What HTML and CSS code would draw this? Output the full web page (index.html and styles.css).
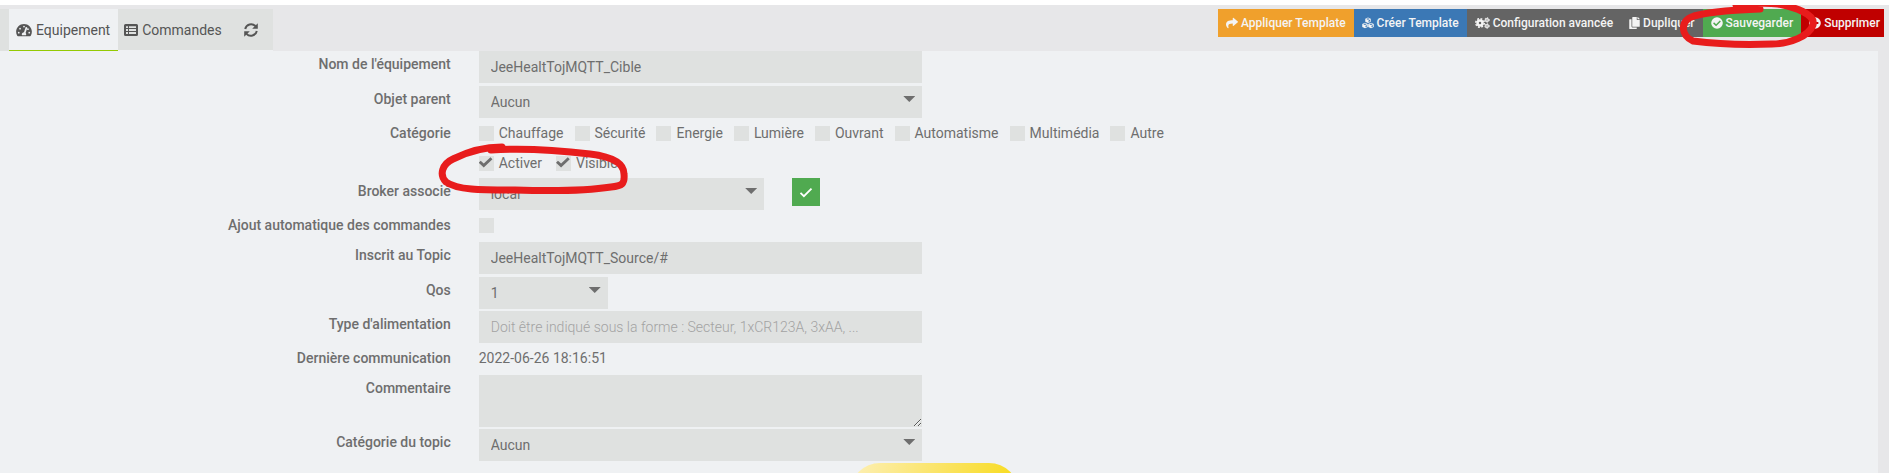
FILE: index.html
```html
<!DOCTYPE html>
<html lang="fr">
<head>
<meta charset="utf-8">
<title>Equipement</title>
<link rel="stylesheet" href="styles.css">
</head>
<body>
<header class="topbar">
  <nav class="tabs">
    <a class="tab tab-active" href="#equipement">
      <svg class="icon-wide" viewBox="0 0 576 512"><path fill-rule="evenodd" d="M288 32C129 32 0 161 0 320c0 53 14 102 39 145 6 10 16 15 27 15h444c11 0 21-5 27-15 25-43 39-92 39-145C576 161 447 32 288 32zM288 96a32 32 0 1 1 0 64a32 32 0 0 1 0-64zM96 384a32 32 0 1 1 0-64a32 32 0 0 1 0 64zM144 240a32 32 0 1 1 0-64a32 32 0 0 1 0 64zM391 151c13 4 20 18 16 31l-61 184c13 11 22 28 22 50 0 12-3 23-9 32H217c-6-9-9-20-9-32 0-43 34-79 79-80l61-184c4-13 30-5 43-1zM432 192a32 32 0 1 1 0 64a32 32 0 0 1 0-64zM480 384a32 32 0 1 1 0-64a32 32 0 0 1 0 64z"/></svg>
      <span>Equipement</span>
    </a>
    <a class="tab" href="#commandes">
      <svg class="icon" viewBox="0 0 14 14"><path fill-rule="evenodd" d="M1.500 1h11A1.500 1.500 0 0 1 14 2.500v9a1.500 1.500 0 0 1-1.500 1.500h-11A1.500 1.500 0 0 1 0 11.500v-9A1.500 1.500 0 0 1 1.500 1zM2 3.200V5h2V3.200zM5 3.200V5h7V3.200zM2 6v2h2V6zM5 6v2h7V6zM2 9v2h2V9zM5 9v2h7V9z"/></svg>
      <span>Commandes</span>
    </a>
    <a class="tab tab-refresh" href="#refresh" aria-label="Rafraîchir">
      <svg class="icon" viewBox="0 0 14 14"><path d="M1.200 6A6 6 0 0 1 11.500 3.200M12.800 8A6 6 0 0 1 2.500 10.800" fill="none" stroke="currentColor" stroke-width="2"/><path d="M13.800.2v5.600H8.200zM.2 13.800V8.200h5.600z"/></svg>
    </a>
  </nav>
  <div class="actions">
    <button class="btn btn-orange" type="button"><svg class="icon-small" viewBox="0 0 512 512"><path d="M503.700 189.800L327.700 37.900C312.300 24.500 288 35.300 288 56v80C127.400 137.900 0 170.100 0 322.300c0 61.500 39.600 122.300 83.300 154.200 13.700 9.900 33.100-2.600 28.100-18.700C66.100 312.800 132.900 274.300 288 272.100V360c0 20.700 24.300 31.500 39.700 18.200l176-152c11.100-9.600 11.100-26.800 0-36.400z"/></svg>Appliquer Template</button>
    <button class="btn btn-blue" type="button"><svg class="icon-small" viewBox="0 0 24 24"><path fill-rule="evenodd" d="M12 1l5.500 2.300v6.200L12 12 6.500 9.500V3.300zM8.700 4.100L12 5.500l3.300-1.400L12 2.700zM13 7v3l3-1.400V5.700zM6 11.500l5.500 2.300V20L6 22.500.5 20v-6.200zM2.700 14.600L6 16l3.300-1.400L6 13.200zM7 17.600v3l3-1.400v-2.900zM18 11.500l5.500 2.300V20L18 22.500 12.500 20v-6.200zM14.700 14.600L18 16l3.300-1.400-3.300-1.400zM19 17.600v3l3-1.400v-2.900z"/></svg>Créer Template</button>
    <button class="btn btn-grey" type="button"><svg class="icon-gears" viewBox="0 0 30 24"><g fill="none" stroke="currentColor"><circle cx="10" cy="12" r="5" stroke-width="5"/><circle cx="10" cy="12" r="8.500" stroke-width="3" stroke-dasharray="3.700 2.975"/><circle cx="24" cy="6" r="2.600" stroke-width="2.600"/><circle cx="24" cy="6" r="4.500" stroke-width="2" stroke-dasharray="2.700 2.012"/><circle cx="24" cy="18" r="2.600" stroke-width="2.600"/><circle cx="24" cy="18" r="4.500" stroke-width="2" stroke-dasharray="2.700 2.012"/></g></svg>Configuration avancée</button>
    <button class="btn btn-grey" type="button"><svg class="icon-copy" viewBox="0 0 448 512"><path d="M320 448v40c0 13.300-10.700 24-24 24H24c-13.300 0-24-10.700-24-24V120c0-13.300 10.700-24 24-24h72v296c0 30.900 25.100 56 56 56h168zm0-344V0H152c-13.300 0-24 10.700-24 24v368c0 13.300 10.700 24 24 24h272c13.300 0 24-10.700 24-24V128H344c-13.200 0-24-10.800-24-24zm121-31L375 7a24 24 0 0 0-17-7h-6v96h96v-6a24 24 0 0 0-7-17z"/></svg>Dupliquer</button>
    <div class="marked">
      <button class="btn btn-green" type="button"><svg class="icon-small" viewBox="0 0 512 512"><path fill-rule="evenodd" d="M504 256a248 248 0 1 1-496 0a248 248 0 0 1 496 0zM227.300 387.300l184-184c6.300-6.200 6.300-16.400 0-22.600l-22.600-22.600c-6.300-6.300-16.400-6.300-22.600 0L216 308.100l-70.100-70c-6.200-6.300-16.300-6.300-22.600 0l-22.600 22.600c-6.300 6.200-6.300 16.400 0 22.600l104 104c6.200 6.300 16.400 6.300 22.600 0z"/></svg>Sauvegarder</button>
      <svg class="mark mark-save" viewBox="0 0 142 52"><path d="M60 9C78 7 94 7 102 8C118 11 140 18 137 29C133 40 114 48 96 48C70 49 40 48 17 45C5 40 3 25 18 20C38 15 60 14 84 13"/></svg>
    </div>
    <button class="btn btn-red" type="button"><svg class="icon-small" viewBox="0 0 512 512"><path fill-rule="evenodd" d="M256 8a248 248 0 1 0 0 496a248 248 0 0 0 0-496zM124 296c-6.600 0-12-5.400-12-12v-56c0-6.600 5.400-12 12-12h264c6.600 0 12 5.400 12 12v56c0 6.600-5.400 12-12 12z"/></svg>Supprimer</button>
  </div>
</header>
<main class="page">
  <form class="form">
    <div class="row row-field row-loose">
      <label class="label" for="name">Nom de l'équipement</label>
      <input class="control" id="name" type="text" value="JeeHealtTojMQTT_Cible">
    </div>
    <div class="row row-field">
      <label class="label" for="parent">Objet parent</label>
      <div class="select"><select class="control" id="parent"><option>Aucun</option></select></div>
    </div>
    <div class="row row-text" role="group" aria-labelledby="cat">
      <span class="label" id="cat">Catégorie</span>
      <div class="checks">
        <label class="check"><input type="checkbox">Chauffage</label>
        <label class="check"><input type="checkbox">Sécurité</label>
        <label class="check"><input type="checkbox">Energie</label>
        <label class="check"><input type="checkbox">Lumière</label>
        <label class="check"><input type="checkbox">Ouvrant</label>
        <label class="check"><input type="checkbox">Automatisme</label>
        <label class="check"><input type="checkbox">Multimédia</label>
        <label class="check"><input type="checkbox">Autre</label>
      </div>
    </div>
    <div class="row row-short">
      <span class="label"></span>
      <div class="checks checks-wide marked">
        <label class="check"><input type="checkbox" checked>Activer</label>
        <label class="check"><input type="checkbox" checked>Visible</label>
        <svg class="mark mark-active" viewBox="0 0 194 54"><path d="M56 13C90 11 130 14 155 17C180 20 189 27 189 37C190 47 187 49 176 50C150 54 110 54 80 53C45 53 22 53 11 45C4 38 7 27 18 22C32 15 47 10 67 10"/></svg>
      </div>
    </div>
    <div class="row row-field">
      <label class="label" for="broker">Broker associé</label>
      <div class="broker">
        <div class="select"><select class="control" id="broker"><option>local</option></select></div>
        <button class="btn-check" type="button" aria-label="Valider"><svg class="icon" viewBox="0 0 14 14"><path d="M1.500 7.800l3.400 3.400L12.500 3.600" fill="none" stroke="currentColor" stroke-width="1.800"/></svg></button>
      </div>
    </div>
    <div class="row row-text">
      <label class="label" for="auto">Ajout automatique des commandes</label>
      <div class="checks"><span class="check"><input type="checkbox" id="auto"></span></div>
    </div>
    <div class="row row-field row-loose">
      <label class="label" for="topic">Inscrit au Topic</label>
      <input class="control" id="topic" type="text" value="JeeHealtTojMQTT_Source/#">
    </div>
    <div class="row row-field">
      <label class="label" for="qos">Qos</label>
      <div class="select select-small"><select class="control" id="qos"><option>1</option></select></div>
    </div>
    <div class="row row-field">
      <label class="label" for="power">Type d'alimentation</label>
      <input class="control" id="power" type="text" placeholder="Doit être indiqué sous la forme : Secteur, 1xCR123A, 3xAA, ...">
    </div>
    <div class="row row-text">
      <span class="label">Dernière communication</span>
      <span class="value">2022-06-26 18:16:51</span>
    </div>
    <div class="row row-field">
      <label class="label" for="comment">Commentaire</label>
      <textarea class="control control-area" id="comment"></textarea>
    </div>
    <div class="row row-field">
      <label class="label" for="topiccat">Catégorie du topic</label>
      <div class="select"><select class="control" id="topiccat"><option>Aucun</option></select></div>
    </div>
  </form>
</main>
<div class="bubble"></div>
</body>
</html>
```
FILE: styles.css
```css
* { box-sizing: border-box; }

body {
  margin: 0;
  min-height: 100vh;
  display: flex;
  flex-direction: column;
  overflow: hidden;
  border-top: 5px solid #fff;
  background: #e7e7e9;
  color: #6e6e6e;
  font: 14px/26px Roboto, sans-serif;
}

button, input, select, textarea { font: inherit; color: inherit; border: 0; border-radius: 0; margin: 0; }

svg { display: block; flex: none; fill: currentColor; }
.icon { width: 14px; height: 14px; }
.icon-wide { width: 16px; height: 14px; }
.icon-small { width: 12px; height: 12px; }
.icon-gears { width: 15px; height: 12px; }
.icon-copy { width: 11px; height: 12px; }

.topbar {
  display: flex;
  justify-content: space-between;
  align-items: flex-start;
  height: 46px;
  padding: 4px 5px 0 0;
}

.tabs { display: flex; padding-left: 9px; background: #dfe1e0; }
.tab {
  display: flex;
  align-items: center;
  gap: 4px;
  height: 42px;
  padding: 0 7px 0 6px;
  border-bottom: 1px solid #eff1f3;
  color: #555;
  text-decoration: none;
}
.tab-active { padding: 0 8px 0 7px; background: #eff1f3; border-bottom-color: #94ca02; }
.tab-refresh { padding: 0 15px; }

.actions { display: flex; }
.btn {
  display: flex;
  align-items: center;
  gap: 3px;
  height: 28px;
  padding: 0 8px;
  color: #f4f4f4;
  font-size: 12px;
  font-weight: 500;
  white-space: nowrap;
}
.btn-orange { background: #f0a02c; }
.btn-blue { background: #3b78b5; }
.btn-grey { background: #646464; }
.btn-green { background: #50aa50; }
.btn-red { background: #c00000; padding: 0 4px 0 8px; }

.marked { position: relative; }
.mark {
  position: absolute;
  z-index: 2;
  overflow: visible;
  fill: none;
  stroke: #e81c1c;
  stroke-width: 7;
  stroke-linecap: round;
  stroke-linejoin: round;
  pointer-events: none;
}
.mark-save { left: -27px; top: -13px; width: 142px; height: 52px; }
.mark-active { left: -44px; top: -13px; width: 194px; height: 54px; }

.page { flex: 1; margin-right: 11px; background: #eff1f3; }
.form { display: flex; flex-direction: column; }
.row { display: grid; grid-template-columns: 24% 1fr; column-gap: 28px; }
.row-field { padding-bottom: 2px; }
.row-loose { padding-bottom: 3px; }
.row-text { padding-bottom: 4px; }
.row-short { padding-bottom: 2px; }
.label { height: 26px; text-align: right; font-weight: 500; }

.control {
  display: block;
  width: 100%;
  height: 32px;
  padding: 0 12px;
  background: #dfe1e0;
  outline: 0;
  appearance: none;
}
.row > .control, .row > .select { width: 31.7%; min-width: 240px; }
.control::placeholder { color: #a3a3a3; font-weight: 300; opacity: 1; }
.control-area { height: 52px; resize: both; }

.select { position: relative; }
.select::after {
  content: "";
  position: absolute;
  right: 7px;
  top: 10px;
  width: 12px;
  height: 6px;
  background: #6e6e6e;
  clip-path: polygon(0 0, 100% 0, 50% 100%);
  pointer-events: none;
}
.row > .select-small { width: 129px; min-width: 0; }

.broker { display: flex; gap: 28px; }
.broker .select { width: 20.4%; }
.btn-check {
  display: grid;
  place-items: center;
  width: 28px;
  height: 28px;
  padding: 0;
  background: #50aa50;
  color: #fff;
}

.checks { display: flex; gap: 11px; }
.checks-wide { gap: 14px; }
.check { display: flex; align-items: center; gap: 5px; height: 26px; }
.check input {
  appearance: none;
  width: 15px;
  height: 15px;
  background: #dfe1e0;
}
.check input:checked::before {
  content: "";
  display: block;
  width: 14px;
  height: 14px;
  background: #6e6e6e;
  clip-path: polygon(0 52%, 14% 38%, 36% 58%, 84% 12%, 98% 26%, 36% 86%);
}

.bubble {
  position: fixed;
  left: 45%;
  bottom: -50px;
  width: 169px;
  height: 60px;
  border-radius: 30px;
  background: linear-gradient(110deg, #fdf0b8, #fae25a 55%, #f8dc20 90%);
}
```
